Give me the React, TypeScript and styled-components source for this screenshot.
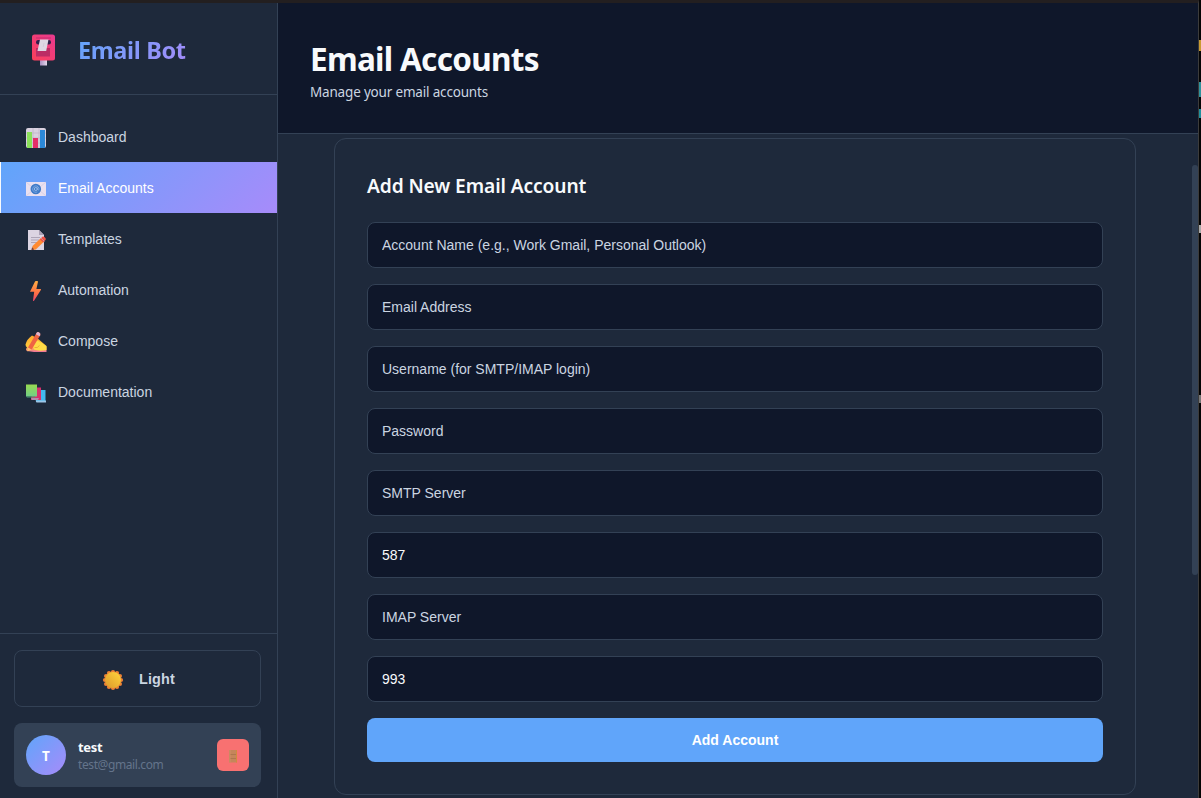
import React from "react";
import styled, { createGlobalStyle } from "styled-components";

const c = {
  panel: "#1e293b",
  deep: "#0f172a",
  line: "#334155",
  text: "#cbd5e1",
  white: "#f8fafc",
  muted: "#64748b",
  accent: "linear-gradient(135deg, #60a5fa 0%, #a78bfa 100%)",
};
const humanist = `"Noto Sans", "Open Sans", sans-serif`;
const arial = `"Liberation Sans", Arial, sans-serif`;

const GlobalStyle = createGlobalStyle`
  * { box-sizing: border-box; }
  body { margin: 0; background: #000; overflow: hidden; font-family: ${humanist}; }
  h1, h2, p { margin: 0; }
  button, input { font-family: ${arial}; }
  svg { display: block; flex: none; }
`;

const Window = styled.div`
  height: 798px;
  width: 1201px;
  display: flex;
`;
const Frame = styled.div`
  width: 1199px;
  border-top: 3px solid #231f20;
  border-right: 1px solid #3c3c3c;
  display: flex;
  background: ${c.panel};
`;
const Backdrop = styled.div`
  width: 2px;
  display: flex;
  flex-direction: column;
  background: #050505;
`;
const Speck = styled.span<{ $gap: number; $size: number; $color: string }>`
  margin-top: ${(p) => p.$gap}px;
  height: ${(p) => p.$size}px;
  background: ${(p) => p.$color};
`;

const Sidebar = styled.aside`
  width: 278px;
  flex: none;
  display: flex;
  flex-direction: column;
  border-right: 1px solid ${c.line};
`;
const Brand = styled.div`
  height: 92px;
  padding: 2px 0 0 27px;
  display: flex;
  align-items: center;
  gap: 19px;
  border-bottom: 1px solid ${c.line};
`;
const BrandName = styled.div`
  font-size: 23.5px;
  line-height: 34px;
  font-weight: 700;
  letter-spacing: -0.35px;
  background: ${c.accent};
  background-clip: text;
  -webkit-background-clip: text;
  color: transparent;
`;
const Nav = styled.nav`
  flex: 1;
  padding-top: 16px;
`;
const NavItem = styled.a<{ $active?: boolean }>`
  height: 51px;
  padding-left: 25px;
  display: flex;
  align-items: center;
  gap: 11px;
  font: 14px ${arial};
  color: ${(p) => (p.$active ? "#fff" : c.text)};
  background: ${(p) => (p.$active ? c.accent : "none")};
  box-shadow: ${(p) => (p.$active ? "inset 1px 0 #f8fafc" : "none")};
  svg { margin-top: 2px; }
`;
const SidebarFooter = styled.div`
  height: 165px;
  padding: 16px 16px 11px 14px;
  border-top: 1px solid ${c.line};
  display: flex;
  flex-direction: column;
  gap: 16px;
`;
const ThemeButton = styled.button`
  height: 57px;
  padding: 0 0 0 2px;
  border: 1px solid ${c.line};
  border-radius: 8px;
  background: none;
  color: ${c.text};
  font-size: 14.4px;
  font-weight: 700;
  letter-spacing: 0.15px;
  display: flex;
  align-items: center;
  justify-content: center;
  gap: 15px;
  svg { margin-top: 2px; }
`;
const UserCard = styled.div`
  height: 64px;
  padding: 0 12px;
  border-radius: 8px;
  background: ${c.line};
  display: flex;
  align-items: center;
  gap: 12px;
`;
const Avatar = styled.div`
  width: 40px;
  height: 40px;
  border-radius: 50%;
  background: ${c.accent};
  color: #fff;
  font-size: 13.5px;
  font-weight: 700;
  display: grid;
  place-items: center;
  padding-top: 1px;
`;
const UserText = styled.div`
  flex: 1;
  padding-top: 3px;
`;
const UserName = styled.div`
  font-size: 13px;
  line-height: 17px;
  font-weight: 700;
  color: ${c.white};
  letter-spacing: -0.3px;
`;
const UserMail = styled.div`
  font-size: 12px;
  line-height: 18px;
  letter-spacing: -0.4px;
  color: ${c.muted};
`;
const Logout = styled.button`
  width: 32px;
  height: 32px;
  padding: 2px 0 0;
  border: 0;
  border-radius: 6px;
  background: #f87171;
  display: grid;
  place-items: center;
`;

const Main = styled.main`
  flex: 1;
  display: flex;
  flex-direction: column;
`;
const Header = styled.header`
  height: 131px;
  padding: 34px 32px 0;
  background: ${c.deep};
  border-bottom: 1px solid ${c.line};
`;
const Title = styled.h1`
  font-size: 31.5px;
  line-height: 43px;
  font-weight: 700;
  letter-spacing: -0.7px;
  color: ${c.white};
`;
const Subtitle = styled.p`
  font-size: 13.5px;
  line-height: 25px;
  letter-spacing: -0.18px;
  color: ${c.text};
`;
const Content = styled.div`
  flex: 1;
  display: flex;
  justify-content: space-between;
  padding: 4px 0 0 56px;
`;
const Card = styled.section`
  width: 802px;
  height: 657px;
  padding: 32px;
  border: 1px solid ${c.line};
  border-radius: 12px;
`;
const CardTitle = styled.h2`
  font-size: 19.2px;
  line-height: 30px;
  height: 51px;
  font-weight: 600;
  letter-spacing: -0.1px;
  color: ${c.white};
`;
const Form = styled.form`
  display: flex;
  flex-direction: column;
  gap: 16px;
`;
const Field = styled.input`
  height: 46px;
  padding: 0 14px;
  border: 1px solid ${c.line};
  border-radius: 8px;
  background: ${c.deep};
  color: ${c.white};
  font-size: 14px;
  outline: 0;
  &::placeholder { color: ${c.text}; opacity: 1; }
`;
const Submit = styled.button`
  height: 44px;
  padding: 0;
  border: 0;
  border-radius: 8px;
  background: #60a5fa;
  color: #fff;
  font-size: 14px;
  font-weight: 700;
`;
const ScrollThumb = styled.div`
  width: 6px;
  height: 410px;
  margin-top: 27px;
  border-radius: 3px;
  background: ${c.line};
`;

const Mailbox = () => (
  <svg width="32" height="32" viewBox="0 0 32 32">
    <defs>
      <linearGradient id="box" x1="1" y1="0" x2="0" y2="1">
        <stop stopColor="#e93a90" /><stop offset="1" stopColor="#fb405a" />
      </linearGradient>
      <linearGradient id="post"><stop stopColor="#a98fc0" /><stop offset="1" stopColor="#e2d8ea" /></linearGradient>
    </defs>
    <rect x="13" y="24" width="7" height="7.500" fill="url(#post)" />
    <rect x="5" y="0.500" width="23" height="26" rx="2.500" fill="url(#box)" />
    <path d="M9 4h15" stroke="#c62a70" />
    <rect x="9" y="14" width="14" height="8.500" fill="#bb2c65" />
    <rect x="9" y="6" width="15" height="4.500" rx="2.200" fill="#30204b" />
    <path d="M13 5.500h8.500l-2.300 11.500h-8.700z" fill="#ded6e4" />
    <path d="M17 9l-.8 4" stroke="#cdc4d5" strokeWidth=".7" />
  </svg>
);
const Chart = () => (
  <svg width="22" height="22" viewBox="0 0 22 22">
    <rect x="1" y="1" width="20" height="20" rx="2" fill="#d9d1df" />
    <path d="M1 6h20M1 11h20M1 16h20M8 1v20M14 1v20" stroke="#b8b0c2" strokeWidth=".6" />
    <rect x="2" y="5" width="5" height="16" fill="#8be05a" />
    <rect x="8" y="11" width="5" height="10" fill="#e42e68" />
    <rect x="15" y="3" width="5" height="18" fill="#2b88d8" />
  </svg>
);
const Mail = () => (
  <svg width="22" height="22" viewBox="0 0 22 22">
    <rect x="1" y="4" width="20" height="14" fill="#e9e0f0" />
    <path d="M1 18l7-6M21 18l-7-6M1 4l6 5M21 4l-6 5" stroke="#d6cbe0" strokeWidth=".8" />
    <circle cx="10.800" cy="11" r="5.300" fill="#3f7bc8" />
    <circle cx="10.800" cy="11" r="1.500" fill="none" stroke="#a9c8f0" strokeWidth=".8" />
    <path d="M12.500 9.500v2q.3 1.300 1.500 0a3.200 3.200 0 1 0-1.600 2.400" fill="none" stroke="#8fb5e8" strokeWidth=".7" />
  </svg>
);
const Memo = () => (
  <svg width="22" height="22" viewBox="0 0 22 22">
    <path d="M3 1h11l5 5v15H3z" fill="#dcd4e2" />
    <path d="M14 1v5h5" fill="#aaa0b5" />
    <path d="M6 8.500h9M6 11h8M6 13.500h6" stroke="#a89fb3" strokeWidth=".9" />
    <path d="M7.500 17l8-7.500 3.300 3.300-8 7.700-4 .5z" fill="#ff8a32" />
    <path d="M14.800 10.200l3.300 3.300 2.600-2.700q.8-1.200-1.500-3l-1.500-.3z" fill="#ee5247" />
    <path d="M16 9l3.500 3.500" stroke="#c9a0a8" strokeWidth=".8" />
    <path d="M6.300 21.200l.8-3 2.200 2.300z" fill="#7b423b" />
  </svg>
);
const Bolt = () => (
  <svg width="22" height="22" viewBox="0 0 22 22">
    <defs><linearGradient id="bolt" x2="0" y2="1"><stop stopColor="#ffae43" /><stop offset=".6" stopColor="#ff7046" /><stop offset="1" stopColor="#e94469" /></linearGradient></defs>
    <path d="M10 1.500L5 11.800h4.200L8 20.500q.3.900 1 .2L16 9.800q.3-.8-.6-.8h-4L13 1.800q0-.8-.8-.8h-1.400q-.5 0-.8.500z" fill="url(#bolt)" />
  </svg>
);
const Writing = () => (
  <svg width="22" height="22" viewBox="0 0 22 22">
    <defs><linearGradient id="hand" x2="0" y2="1"><stop stopColor="#ffa92e" /><stop offset=".65" stopColor="#ffc83a" /><stop offset="1" stopColor="#ef719c" /></linearGradient></defs>
    <path d="M.500 13.500Q2 8 7 4.500l5 2.500 3 2.500 6.500 5.500v6H9l-7-1q-2-1.500 0-3.500-1.500-1-1.500-3z" fill="url(#hand)" />
    <path d="M8 15q1-6 5-5 5 2 8.500 5.500V19q-8 1.500-12.500-.5z" fill="#ffdc46" />
    <path d="M9.500 16.500q3 1 5-2" stroke="#e8a137" strokeWidth=".8" fill="none" />
    <path d="M3 16.500L11.500 2q1-1.500 2.700-.6t1 2.800L7 18l-4 2z" fill="#ef6343" />
    <path d="M11.500 2q1-1.500 2.700-.6t1 2.800l-.7 1-3.600-2z" fill="#ddb5cf" />
    <path d="M2.500 20.500l.5-4 3.500 2z" fill="#ffc46a" />
  </svg>
);
const Books = () => (
  <svg width="22" height="22" viewBox="0 0 22 22">
    <path d="M11 8h9.500v12H11z" fill="#42b9ef" /><path d="M10.500 18.500H21v2H11.500z" fill="#9cc6e8" />
    <path d="M11 5.500h5V18H6v-2.500z" fill="#d92f6d" /><path d="M6 16h8l-1 2H7z" fill="#b28cae" />
    <defs><linearGradient id="book" x2="0" y2="1"><stop stopColor="#98da50" /><stop offset="1" stopColor="#71ce87" /></linearGradient></defs>
    <path d="M1 2.500h11v12H1z" fill="url(#book)" /><path d="M1 14.500h9v1H2z" fill="#4a9e77" />
  </svg>
);
const petals = Array.from({ length: 12 }, (_, i) => {
  const a = (i * Math.PI) / 6;
  return { x: 11 + 8 * Math.sin(a), y: 11 - 8 * Math.cos(a) };
});
const Sun = () => (
  <svg width="22" height="22" viewBox="0 0 22 22">
    <defs><linearGradient id="sun" x1="1" x2="0" y2="1"><stop stopColor="#ffd53c" /><stop offset="1" stopColor="#dc982b" /></linearGradient></defs>
    {petals.map((p, i) => <circle key={i} cx={p.x} cy={p.y} r="2.100" fill="#ee8134" />)}
    <circle cx="11" cy="11" r="8" fill="url(#sun)" />
  </svg>
);
const Door = () => (
  <svg width="10" height="14" viewBox="0 0 10 14">
    <rect x="1" y="1" width="8" height="12.500" fill="#c5855b" />
    <path d="M2 5.500h6M2 9.500h6" stroke="#a8734c" strokeWidth=".8" />
    <path d="M2 1v12.500" stroke="#d2926a" strokeWidth=".8" />
    <path d="M8.500 1v12.500" stroke="#cf8c3e" strokeWidth="1" />
  </svg>
);

const navigation = [
  { label: "Dashboard", Icon: Chart },
  { label: "Email Accounts", Icon: Mail, active: true },
  { label: "Templates", Icon: Memo },
  { label: "Automation", Icon: Bolt },
  { label: "Compose", Icon: Writing },
  { label: "Documentation", Icon: Books },
];
const fields = [
  { placeholder: "Account Name (e.g., Work Gmail, Personal Outlook)" },
  { placeholder: "Email Address" },
  { placeholder: "Username (for SMTP/IMAP login)" },
  { placeholder: "Password", type: "password" },
  { placeholder: "SMTP Server" },
  { placeholder: "SMTP Port", value: "587" },
  { placeholder: "IMAP Server" },
  { placeholder: "IMAP Port", value: "993" },
];

export default function App() {
  return (
    <Window>
      <GlobalStyle />
      <Frame>
        <Sidebar>
          <Brand><Mailbox /><BrandName>Email Bot</BrandName></Brand>
          <Nav>
            {navigation.map(({ label, Icon, active }) => (
              <NavItem key={label} $active={active}><Icon />{label}</NavItem>
            ))}
          </Nav>
          <SidebarFooter>
            <ThemeButton><Sun />Light</ThemeButton>
            <UserCard>
              <Avatar>T</Avatar>
              <UserText><UserName>test</UserName><UserMail>test@gmail.com</UserMail></UserText>
              <Logout aria-label="Log out"><Door /></Logout>
            </UserCard>
          </SidebarFooter>
        </Sidebar>
        <Main>
          <Header>
            <Title>Email Accounts</Title>
            <Subtitle>Manage your email accounts</Subtitle>
          </Header>
          <Content>
            <Card>
              <CardTitle>Add New Email Account</CardTitle>
              <Form>
                {fields.map((f) => (
                  <Field key={f.placeholder} type={f.type ?? "text"} placeholder={f.placeholder} defaultValue={f.value} />
                ))}
                <Submit type="button">Add Account</Submit>
              </Form>
            </Card>
            <ScrollThumb />
          </Content>
        </Main>
      </Frame>
      <Backdrop>
        <Speck $gap={40} $size={11} $color="#c99a32" />
        <Speck $gap={31} $size={15} $color="#2f929c" />
        <Speck $gap={12} $size={9} $color="#218f9c" />
        <Speck $gap={107} $size={8} $color="#aaa" />
        <Speck $gap={162} $size={8} $color="#777" />
      </Backdrop>
    </Window>
  );
}
